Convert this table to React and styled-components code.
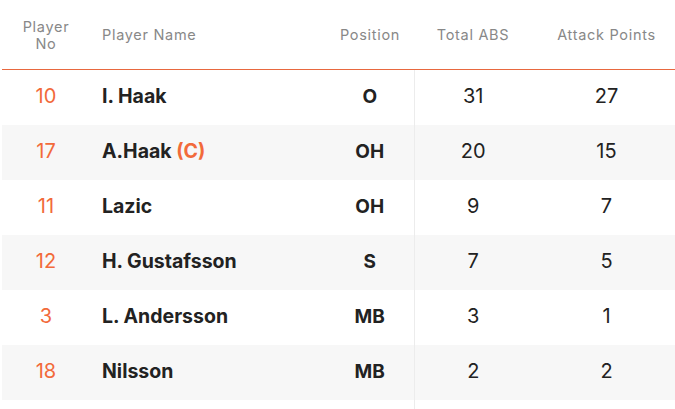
import styled, { createGlobalStyle } from "styled-components"

const GlobalStyle = createGlobalStyle`
    body {
        margin: 0;
        background: #fff;
        font-family: Inter, "Noto Sans", sans-serif;
    }
`

const players = [
    { no: 10, name: "I. Haak", pos: "O", abs: 31, att: 27 },
    { no: 17, name: "A.Haak", captain: true, pos: "OH", abs: 20, att: 15 },
    { no: 11, name: "Lazic", pos: "OH", abs: 9, att: 7 },
    { no: 12, name: "H. Gustafsson", pos: "S", abs: 7, att: 5 },
    { no: 3, name: "L. Andersson", pos: "MB", abs: 3, att: 1 },
    { no: 18, name: "Nilsson", pos: "MB", abs: 2, att: 2 },
]

const Wrap = styled.div`
    padding-left: 2px;
    height: 409px;
    overflow: hidden;
`

const Table = styled.table`
    width: calc(100% + 6px);
    border-collapse: collapse;
    table-layout: fixed;
`

const Head = styled.th`
    height: 69px;
    padding: 0;
    font-size: 14.5px;
    font-weight: 400;
    line-height: 17px;
    letter-spacing: 0.7px;
    color: #888;
    text-align: ${p => p.$left ? "left" : "center"};
    padding-left: ${p => p.$left ? "12px" : "0"};
    border-bottom: 1px solid #e8683f;
    vertical-align: middle;
`

const Row = styled.tr`
    background: ${p => p.$alt ? "#f7f7f7" : "#fff"};
`

const Cell = styled.td`
    height: 52px;
    padding: 0 0 3px;
    text-align: center;
    font-size: 20px;
    color: #222;
    border-left: ${p => p.$divider ? "1px solid #ececec" : "none"};
`

const NoCell = styled(Cell)`
    color: #f26a3a;
`

const NameCell = styled(Cell)`
    text-align: left;
    padding-left: 12px;
    font-size: 19.5px;
    font-weight: 700;
`

const PosCell = styled(Cell)`
    font-size: 19px;
    font-weight: 700;
`

const Captain = styled.span`
    color: #f26a3a;
`

const App = () => {
    return (
        <Wrap>
            <GlobalStyle />
            <Table>
                <colgroup>
                    <col style={{ width: 88 }} />
                    <col style={{ width: 236 }} />
                    <col style={{ width: 88 }} />
                    <col style={{ width: 118 }} />
                    <col />
                </colgroup>
                <thead>
                    <tr>
                        <Head>Player<br />No</Head>
                        <Head $left>Player Name</Head>
                        <Head>Position</Head>
                        <Head>Total ABS</Head>
                        <Head>Attack Points</Head>
                    </tr>
                </thead>
                <tbody>
                    {players.map((p, i) => (
                        <Row key={p.no} $alt={i % 2 === 1}>
                            <NoCell>{p.no}</NoCell>
                            <NameCell>
                                {p.name}
                                {p.captain && <Captain> (C)</Captain>}
                            </NameCell>
                            <PosCell>{p.pos}</PosCell>
                            <Cell $divider>{p.abs}</Cell>
                            <Cell>{p.att}</Cell>
                        </Row>
                    ))}
                    <Row>
                        <Cell />
                        <Cell />
                        <Cell />
                        <Cell $divider />
                        <Cell />
                    </Row>
                </tbody>
            </Table>
        </Wrap>
    )
}

export default App
